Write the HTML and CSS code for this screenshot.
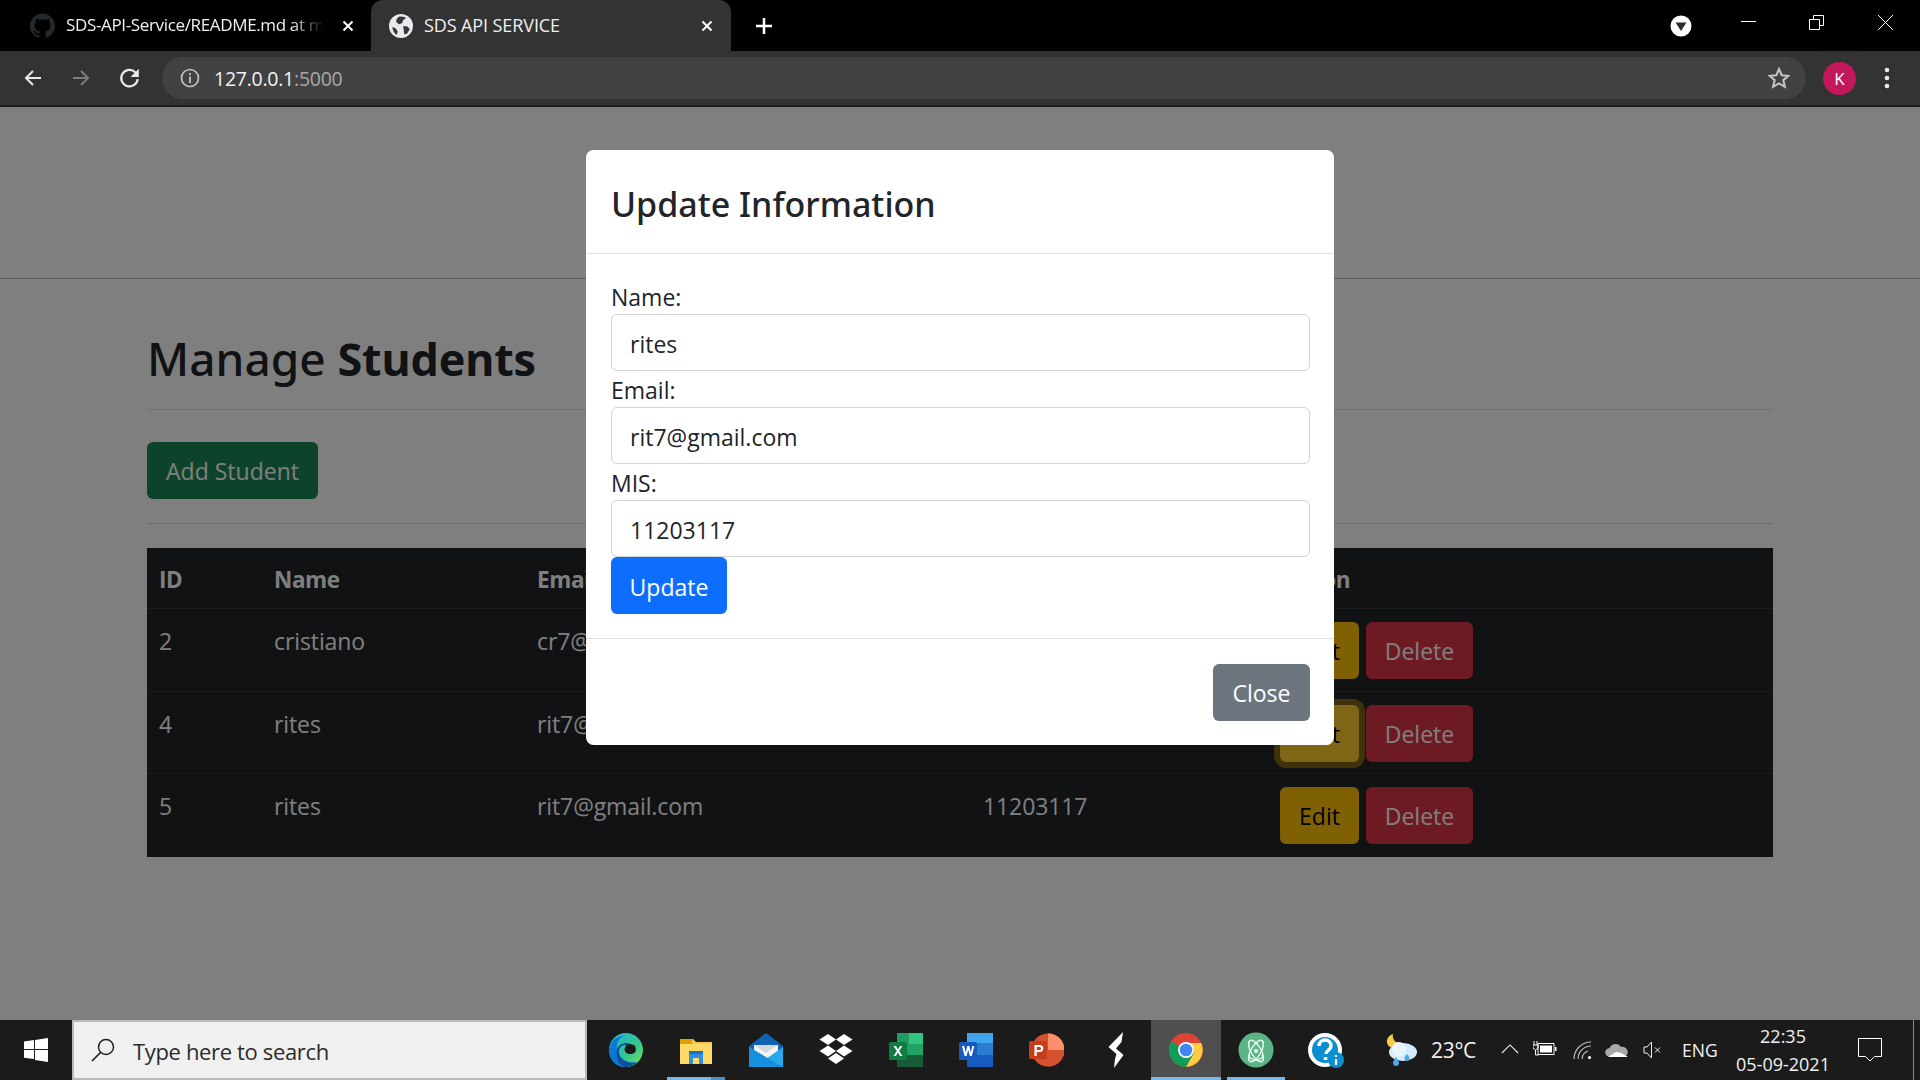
FILE: index.html
```html
<!DOCTYPE html>
<html lang="en">
<head>
<meta charset="utf-8">
<title>SDS API SERVICE</title>
<link rel="stylesheet" href="styles.css">
</head>
<body>
<div class="screen">
  <div class="tabstrip">
    <div class="tab tab-bg">
      <svg class="favicon" viewBox="0 0 16 16"><path fill="#24292e" d="M8 0C3.58 0 0 3.58 0 8c0 3.54 2.29 6.53 5.47 7.59.4.07.55-.17.55-.38 0-.19-.01-.82-.01-1.49-2.01.37-2.53-.49-2.69-.94-.09-.23-.48-.94-.82-1.13-.28-.15-.68-.52-.01-.53.63-.01 1.08.58 1.23.82.72 1.21 1.87.87 2.33.66.07-.52.28-.87.51-1.07-1.78-.2-3.64-.89-3.64-3.95 0-.87.31-1.59.82-2.15-.08-.2-.36-1.02.08-2.12 0 0 .67-.21 2.2.82.64-.18 1.32-.27 2-.27s1.36.09 2 .27c1.53-1.04 2.2-.82 2.2-.82.44 1.1.16 1.92.08 2.12.51.56.82 1.27.82 2.15 0 3.07-1.87 3.75-3.65 3.95.29.25.54.73.54 1.48 0 1.07-.01 1.93-.01 2.2 0 .21.15.46.55.38A8.013 8.013 0 0016 8c0-4.42-3.58-8-8-8z"/></svg>
      <span class="tab-title tab-title-fade">SDS-API-Service/README.md at m</span>
      <svg class="tab-x" viewBox="0 0 12 12"><path d="M1.5 1.5l9 9M10.5 1.5l-9 9" stroke="#fff" stroke-width="2"/></svg>
    </div>
    <div class="tab tab-active">
      <svg class="favicon" viewBox="0 0 22 22"><circle cx="11" cy="11" r="11" fill="#e8eaed"/><path fill="#35363a" d="M9 2.5c2.5-.6 6 .2 6.500 1.500L13 5.500l-1 3-3 1-2.500-2.500L7 4.500zM13 11l4 .5 2 2.500-2.500 4-2.500.5-.5-3.500zM3 12l3 1 2 3-1 3.200C5 18 3.300 15 3 12z"/></svg>
      <span class="tab-title tab-title-main">SDS API SERVICE</span>
      <svg class="tab-x" viewBox="0 0 12 12"><path d="M1.500 1.500l9 9M10.500 1.500l-9 9" stroke="#fff" stroke-width="2"/></svg>
    </div>
    <svg class="new-tab" viewBox="0 0 18 18"><path d="M9 1v16M1 9h16" stroke="#fff" stroke-width="2.500"/></svg>
    <div class="strip-space"></div>
    <svg class="tab-search" viewBox="0 0 22 22"><circle cx="11" cy="11" r="10.500" fill="#fff"/><path d="M5.500 7.500h11L11 16z" fill="#2b2b2b"/></svg>
    <svg class="win-btn win-min" viewBox="0 0 15 15"><path d="M0 7.500h15" stroke="#fff"/></svg>
    <svg class="win-btn win-max" viewBox="0 0 15 15"><path d="M.5 4.500h10v10H.5zM4.500 4.500V.5h10v10h-4" fill="none" stroke="#fff"/></svg>
    <svg class="win-btn win-close" viewBox="0 0 15 15"><path d="M0 0l15 15M15 0L0 15" stroke="#fff"/></svg>
  </div>

  <div class="toolbar">
    <svg class="nav-icon nav-back" viewBox="0 0 20 20"><path d="M18 10H3M10 3l-7 7 7 7" fill="none" stroke="#e8eaed" stroke-width="2"/></svg>
    <svg class="nav-icon nav-fwd" viewBox="0 0 20 20"><path d="M2 10h15M10 3l7 7-7 7" fill="none" stroke="#7b7c7d" stroke-width="2"/></svg>
    <svg class="nav-icon nav-reload" viewBox="0 0 20 20"><path d="M17 11a7.500 7.500 0 1 1-2-6" fill="none" stroke="#e8eaed" stroke-width="2"/><path d="M18 1.500v7.500h-7.500z" fill="#e8eaed"/></svg>
    <div class="omnibox">
      <svg class="omni-info" viewBox="0 0 20 20"><circle cx="10" cy="10" r="8.500" fill="none" stroke="#c4c5c6" stroke-width="1.700"/><path d="M10 8.500V15M10 5v2" stroke="#c4c5c6" stroke-width="1.800"/></svg>
      <span class="url"><span class="url-host">127.0.0.1</span><span class="url-port">:5000</span></span>
      <span class="omni-space"></span>
      <svg class="omni-star" viewBox="0 0 22 22"><path d="M11 2l2.700 6.200 6.700.6-5.100 4.400 1.600 6.600L11 16.300l-5.900 3.500 1.600-6.600L1.600 8.800l6.700-.6z" fill="none" stroke="#c4c5c6" stroke-width="2"/></svg>
    </div>
    <div class="avatar">K</div>
    <svg class="kebab" viewBox="0 0 6 22"><circle cx="3" cy="3" r="2.300" fill="#e8eaed"/><circle cx="3" cy="11" r="2.300" fill="#e8eaed"/><circle cx="3" cy="19" r="2.300" fill="#e8eaed"/></svg>
  </div>

  <div class="page">
    <div class="top-band"></div>
    <div class="container">
      <h2 class="page-title">Manage <b>Students</b></h2>
      <div class="add-bar"><button class="btn btn-green">Add Student</button></div>
      <table class="students">
        <colgroup><col class="c-id"><col class="c-name"><col class="c-email"><col class="c-mis"><col class="c-act"></colgroup>
        <thead><tr><th>ID</th><th>Name</th><th>Email</th><th>MIS</th><th>Action</th></tr></thead>
        <tbody>
          <tr><td>2</td><td>cristiano</td><td>cr7@gmail.com</td><td>11203100</td><td><div class="acts"><button class="btn btn-yellow">Edit</button><button class="btn btn-red">Delete</button></div></td></tr>
          <tr><td>4</td><td>rites</td><td>rit7@gmail.com</td><td>11203117</td><td><div class="acts"><button class="btn btn-yellow btn-focus">Edit</button><button class="btn btn-red">Delete</button></div></td></tr>
          <tr><td>5</td><td>rites</td><td>rit7@gmail.com</td><td>11203117</td><td><div class="acts"><button class="btn btn-yellow">Edit</button><button class="btn btn-red">Delete</button></div></td></tr>
        </tbody>
      </table>
    </div>

    <div class="backdrop">
      <div class="modal">
        <div class="modal-head"><h4 class="modal-title">Update Information</h4></div>
        <form class="modal-body">
          <label class="lbl">Name:</label>
          <input class="field" value="rites">
          <label class="lbl">Email:</label>
          <input class="field" value="rit7@gmail.com">
          <label class="lbl">MIS:</label>
          <input class="field" value="11203117">
          <div><button type="button" class="btn btn-blue">Update</button></div>
        </form>
        <div class="modal-foot"><button class="btn btn-grey">Close</button></div>
      </div>
    </div>
  </div>

  <div class="taskbar">
    <div class="start"><svg class="win-logo" viewBox="0 0 24 24"><path fill="#fff" d="M0 3.500l10-1.400V11H0zM11 2l13-2v11H11zM0 12h10v9L0 19.700zM11 12h13v12l-13-2z"/></svg></div>
    <div class="searchbox">
      <svg class="mag" viewBox="0 0 24 24"><circle cx="15" cy="9" r="7.500" fill="none" stroke="#222" stroke-width="1.500"/><path d="M9.500 14.500L1 23" stroke="#222" stroke-width="1.700"/></svg>
      <span class="search-text">Type here to search</span>
    </div>
    <div class="apps">
      <div class="app"><svg viewBox="0 0 36 36"><defs><linearGradient id="e1" x1="0" y1="0" x2="1" y2="1"><stop offset="0" stop-color="#22b8d8"/><stop offset=".6" stop-color="#35c58b"/><stop offset="1" stop-color="#7fe35d"/></linearGradient></defs><circle cx="18" cy="18" r="17" fill="url(#e1)"/><path d="M1 18C2 9 9 3 17 4c-6 1-9 7-8 13 1 8 9 15 20 13-3 3-7 5-12 5C8 35 1 28 1 18z" fill="#0c78d4"/><path d="M9 17c2-6 10-8 15-4 3 2 4 6 2 8-3 2-8 1-9-2-1-2 1-5 3-5-5-2-9 1-9 6 0 8 9 13 18 10-3 3-7 5-12 5-8-2-9-12-8-18z" fill="#0f4f96"/><path d="M17 19c1 3 6 4 9 2 3-2 2-6 0-8-1 0-3-1-5-1-3 1-5 4-4 7z" fill="#1b1b1b"/></svg></div>
      <div class="app app-on app-on-split"><svg viewBox="0 0 36 36"><path d="M2 7h13l3 3h16v22H2z" fill="#f2c94c"/><path d="M2 7h12v5H2z" fill="#e0a000"/><path d="M2 12h32v20H2z" fill="#ffd966"/><path d="M11 19h14v13h-4v-6h-6v6h-4z" fill="#2f8fe0"/><path d="M11 19h14v3H11z" fill="#1f6fc0"/></svg></div>
      <div class="app"><svg viewBox="0 0 36 36"><path d="M18 1l17 13v21H1V14z" fill="#0f62b0"/><path d="M6 13h24v8l-12 8-12-8z" fill="#f4f4f4"/><path d="M6 13h24l-12 8z" fill="#d4d8de"/><path d="M1 15l17 12 17-12v20H1z" fill="#27a8e8"/><path d="M1 15l34 20H1z" fill="#1490dd"/></svg></div>
      <div class="app"><svg viewBox="0 0 36 36"><path fill="#fff" d="M10 2l8 5.500-8 5.500-8.500-5.500zM26 2l8.500 5.500-8.500 5.500-8-5.500zM10 13.500l8 5.500-8 5.500L1.500 19zM26 13.500l8.500 5.500-8.500 5.500-8-5.500zM18 21l8 5.500-8 5.500-8-5.500z"/></svg></div>
      <div class="app"><svg viewBox="0 0 36 36"><path d="M9 1h24a2 2 0 0 1 2 2v30a2 2 0 0 1-2 2H9z" fill="#1f9e63"/><path d="M21 1h14v11H21z" fill="#33c481"/><path d="M21 12h14v11H21z" fill="#21a366"/><path d="M9 23h26v12H9z" fill="#185c37"/><rect x="1" y="10" width="18" height="18" rx="1.500" fill="#107c41"/><path d="M5.500 14h2.500l2 3.400 2-3.400h2.400l-3.200 5 3.300 5h-2.500l-2-3.500-2.100 3.500H5.500l3.300-5z" fill="#fff"/></svg></div>
      <div class="app"><svg viewBox="0 0 36 36"><path d="M9 1h24a2 2 0 0 1 2 2v30a2 2 0 0 1-2 2H11a2 2 0 0 1-2-2z" fill="#2b7cd3"/><path d="M9 1h26v10H9z" fill="#41a5ee"/><path d="M9 11h26v12H9z" fill="#2b7cd3"/><path d="M9 23h26v12H9z" fill="#185abd"/><rect x="1" y="10" width="18" height="18" rx="1.500" fill="#185abd"/><path d="M4 14h2.200l1.500 6.500L9.400 14h1.800l1.700 6.500L14.300 14H16.300l-2.500 10h-1.900L10.200 18l-1.700 6H6.600z" fill="#fff"/></svg></div>
      <div class="app"><svg viewBox="0 0 36 36"><circle cx="20" cy="18" r="16.500" fill="#d35230"/><path d="M20 1.500A16.500 16.500 0 0 1 36.500 18H20z" fill="#ff8f6b"/><path d="M20 18h16.500A16.500 16.500 0 0 1 20 34.500z" fill="#d35230"/><rect x="1" y="9" width="18" height="18" rx="1.500" fill="#c43e1c"/><path d="M6.500 13h5c2.500 0 3.800 1.400 3.800 3.500s-1.500 3.500-3.900 3.500H8.700v4H6.500zm2.200 2v3h2.500c1 0 1.800-.5 1.800-1.500s-.7-1.500-1.800-1.500z" fill="#fff"/></svg></div>
      <div class="app"><svg viewBox="0 0 36 36"><path fill="#fff" d="M25 0L23.500 10 18 16.500 25.500 23 16 36 17 27 18.500 22 10.500 15z"/></svg></div>
      <div class="app app-on app-active"><svg viewBox="0 0 36 36"><circle cx="18" cy="18" r="17" fill="#db4437"/><path d="M18 18L3.300 9.500A17 17 0 0 0 18 35l8-13z" fill="#0f9d58"/><path d="M18 11h15.200A17 17 0 0 1 18 35l7.500-13A8 8 0 0 0 18 11z" fill="#ffcd40"/><circle cx="18" cy="18" r="8" fill="#fff"/><circle cx="18" cy="18" r="6.300" fill="#4285f4"/></svg></div>
      <div class="app app-on"><svg viewBox="0 0 36 36"><circle cx="18" cy="18" r="17.500" fill="#5bb584"/><g fill="none" stroke="#eafff2" stroke-width="1.400"><ellipse cx="18" cy="19" rx="12" ry="5" transform="rotate(60 18 19)"/><ellipse cx="18" cy="19" rx="12" ry="5" transform="rotate(-60 18 19)"/><path d="M12 23c-3 2 3 5 6 5s9-3 6-5"/></g><circle cx="18" cy="19" r="2" fill="#eafff2"/></svg></div>
      <div class="app"><svg viewBox="0 0 36 36"><circle cx="17" cy="18" r="15" fill="#0b8fd0" stroke="#fff" stroke-width="4"/><path d="M11 14c0-4 3-6 6-6s6 2 6 6c0 4-5 4-5 8M17.500 25v3" fill="none" stroke="#fff" stroke-width="3.500"/><circle cx="28" cy="28" r="8" fill="#0b8fd0"/><path d="M28 27v6M28 23v2" stroke="#fff" stroke-width="2.200"/></svg></div>
    </div>
    <div class="tray">
      <svg class="weather" viewBox="0 0 36 36"><path d="M10 2c-1 5 2 9 8 9-1 4-6 7-11 4C2 12 3 4 10 2z" fill="#f7c948"/><ellipse cx="20" cy="20" rx="14" ry="9" fill="#d7ecfb"/><circle cx="16" cy="17" r="7" fill="#eaf6fe"/><path d="M13 25c2 3 3 4 3 6a3 3 0 0 1-6 0c0-2 1-3 3-6zM24 22c1.500 2 2.500 3 2.500 4.500a2.500 2.500 0 0 1-5 0C21.500 25 22.500 24 24 22z" fill="#4aa8ec"/></svg>
      <span class="temp">23°C</span>
      <svg class="chev" viewBox="0 0 20 12"><path d="M1 11l9-9 9 9" fill="none" stroke="#f0f0f0" stroke-width="1.200"/></svg>
      <svg class="batt" viewBox="0 0 24 16"><path d="M5 3.500h16v11H5z" fill="none" stroke="#fff"/><path d="M7 5.500h12v7H7z" fill="#fff"/><path d="M22 7h1.500v4H22z" fill="#fff"/><path d="M0 5h5v3l-2.500 2L0 8zM1 1v4M4 1v4M2.500 10v5h3" fill="none" stroke="#fff"/></svg>
      <svg class="wifi" viewBox="0 0 20 20"><path d="M1 19A17 17 0 0 1 18 2M5 19A13 13 0 0 1 18 6M9 19a9 9 0 0 1 6-8" fill="none" stroke="#bdbdbd" stroke-width="1.200"/><circle cx="16.500" cy="17.500" r="1.600" fill="#fff"/></svg>
      <svg class="cloud" viewBox="0 0 24 16"><path d="M5 15a4.500 4.500 0 0 1-.5-9A6.500 6.500 0 0 1 16 5a5 5 0 0 1 3 10z" fill="#a8a8a8"/><path d="M3 15l8-5 5 1 7 4z" fill="#fff"/></svg>
      <svg class="speaker" viewBox="0 0 20 18"><path d="M1 6h3l4.500-5v16L4 12H1zM12 6.500l5 5M17 6.500l-5 5" fill="none" stroke="#eee"/></svg>
      <span class="lang">ENG</span>
      <div class="clock"><span>22:35</span><span>05-09-2021</span></div>
      <svg class="notif" viewBox="0 0 24 24"><path d="M.5.500h23v18h-7l-4.500 4.500-4.500-4.500h-7z" fill="none" stroke="#fff"/></svg>
      <div class="show-desktop"></div>
    </div>
  </div>
</div>
</body>
</html>
```

FILE: styles.css
```css
* { box-sizing: border-box; }
html, body { margin: 0; height: 100%; overflow: hidden; }
body { font-family: "Open Sans", "Noto Sans", sans-serif; }
.screen { width: 1920px; height: 1080px; display: flex; flex-direction: column; background: #fff; }

/* tab strip */
.tabstrip { height: 51px; background: #000; display: flex; align-items: center; flex: none; }
.tab { height: 51px; display: flex; align-items: center; position: relative; }
.tab-bg { width: 371px; padding: 0 17px 0 30px; }
.tab-active { width: 360px; padding: 0 18px 0 18px; background: #333; border-radius: 12px 12px 0 0; }
.favicon { width: 24px; height: 24px; flex: none; }
.tab-bg .favicon { height: 26px; width: 25px; }
.tab-title { font-size: 17px; color: #f0f0f0; white-space: nowrap; overflow: hidden; flex: 1; margin: -2px 0 0 11px; letter-spacing: -.35px; }
.tab-title-main { font-size: 18px; letter-spacing: -.1px; }
.tab-title-fade { -webkit-mask-image: linear-gradient(90deg, #000 84%, transparent 96%); mask-image: linear-gradient(90deg, #000 84%, transparent 96%); }
.tab-x { width: 12px; height: 12px; flex: none; margin-left: 8px; }
.new-tab { width: 18px; height: 18px; margin-left: 24px; flex: none; }
.strip-space { flex: 1; }
.tab-search { width: 22px; height: 22px; margin-right: 49px; flex: none; }
.win-btn { width: 15px; height: 15px; flex: none; }
.win-min { margin-right: 53px; margin-top: -9px; }
.win-max { margin-right: 54px; margin-top: -6px; }
.win-close { margin-right: 27px; margin-top: -6px; }

/* toolbar */
.toolbar { height: 56px; background: #333; border-bottom: 2px solid #1c1c1c; display: flex; align-items: center; flex: none; padding-left: 23px; }
.nav-icon { width: 20px; height: 20px; flex: none; }
.nav-fwd { margin-left: 28px; }
.nav-reload { margin-left: 28px; width: 22px; height: 22px; }
.omnibox { width: 1644px; height: 42px; margin-left: 21px; border-radius: 21px; background: #424242; display: flex; align-items: center; padding: 0 16px 0 18px; }
.omni-info { width: 20px; height: 20px; flex: none; }
.url { font-size: 19.500px; margin-left: 14px; letter-spacing: -.25px; }
.url-host { color: #f1f3f4; }
.url-port { color: #a8a9aa; }
.omni-space { flex: 1; }
.omni-star { width: 22px; height: 22px; flex: none; }
.avatar { width: 33px; height: 33px; border-radius: 50%; background: #c2185b; color: #fff; font-size: 17px; display: flex; align-items: center; justify-content: center; margin-left: 17px; flex: none; }
.kebab { width: 6px; height: 22px; margin-left: 28px; flex: none; }

/* page */
.page { flex: 1; position: relative; overflow: hidden; color: #212529; background: #fff; }
.top-band { height: 172px; border-bottom: 1px solid #bfc4c8; }
.container { padding: 0 147px; }
.page-title { margin: 0; font-family: "Noto Sans", sans-serif; font-size: 46px; font-weight: 500; line-height: 72px; height: 131px; padding: 43px 0 15px; border-bottom: 1px solid #dee2e6; }
.page-title b { font-family: "Open Sans", sans-serif; font-weight: 700; font-size: 45px; letter-spacing: -.3px; }
.add-bar { padding: 32px 0 24px; border-bottom: 1px solid #dee2e6; margin-bottom: 24px; display: flex; }
.btn { height: 57px; padding: 2px 19px 0; border: 0; border-radius: 6px; font: 400 23px/55px "Open Sans", sans-serif; }
.btn-green { background: #198754; color: #fff; width: 171px; }
.btn-yellow { background: #ffc107; color: #000; width: 79px; padding: 2px 0 0; }
.btn-focus { background: #ffca2c; box-shadow: 0 0 0 6px rgba(217,164,6,.5); }
.btn-red { background: #dc3545; color: #fff; width: 107px; padding: 2px 0 0; }
.btn-blue { background: #0d6efd; color: #fff; width: 116px; padding: 3px 0 0; }
.btn-grey { background: #6c757d; color: #fff; width: 97px; padding: 2px 0 0; }

.students { width: 1626px; table-layout: fixed; border-collapse: collapse; background: #212529; color: #fff; font-size: 23px; }
.c-id { width: 115px; }
.c-name { width: 263px; }
.c-email { width: 446px; }
.c-mis { width: 297px; }
.students th { text-align: left; font-weight: 700; font-size: 22.500px; letter-spacing: -.4px; padding: 12px 12px 9px; line-height: 39px; border-bottom: 1px solid #32383e; }
.students td { vertical-align: top; padding: 13px 12px 11.500px; line-height: 39px; letter-spacing: -.1px; border-bottom: 1px solid #32383e; }
.students tr:last-child td { border-bottom: 0; padding-bottom: 12.500px; }
.acts { display: flex; gap: 7px; }

/* modal */
.backdrop { position: absolute; inset: 0; background: rgba(0,0,0,.5); display: flex; justify-content: center; align-items: flex-start; padding-top: 43px; }
.modal { width: 748px; background: #fff; border-radius: 7.500px; display: flex; flex-direction: column; }
.modal-head { height: 104px; padding: 27px 25px 0; border-bottom: 1px solid #dee2e6; }
.modal-title { margin: 0; font-family: "Noto Sans", sans-serif; font-size: 34px; font-weight: 500; line-height: 54px; color: #212529; }
.modal-body { padding: 24px 24px 24px 25px; display: flex; flex-direction: column; }
.lbl { font-size: 23px; line-height: 33px; padding-top: 3px; }
.field { height: 57px; width: 100%; padding: 2px 19px 0 18px; border: 1px solid #ced4da; border-radius: 6px; font: 400 23px "Open Sans", sans-serif; color: #212529; background: #fff; }
.modal-foot { border-top: 1px solid #dee2e6; padding: 25px 24px 24px; display: flex; justify-content: flex-end; }

/* taskbar */
.taskbar { height: 60px; background: #1b1b1b; display: flex; align-items: center; flex: none; }
.start { width: 72px; height: 60px; display: flex; align-items: center; justify-content: center; }
.win-logo { width: 24px; height: 24px; }
.searchbox { width: 515px; height: 60px; background: #f0f0f0; border: 2px solid #b9b9b9; display: flex; align-items: center; padding-left: 17px; }
.mag { width: 24px; height: 24px; flex: none; }
.search-text { font-size: 22px; color: #2b2b2b; margin-left: 18px; letter-spacing: -.35px; margin-top: 1px; }
.apps { display: flex; margin-left: 4px; width: 768px; }
.app { width: 70px; height: 60px; display: flex; align-items: center; justify-content: center; position: relative; flex: none; }
.app svg { width: 36px; height: 36px; }
.app-on::after { content: ""; position: absolute; left: 6px; right: 6px; bottom: 0; height: 3px; background: #76b9ed; }
.app-active { background: #4f4f4f; }
.app-active::after { left: 0; right: 0; }
.app-on-split::before { content: ""; position: absolute; right: 6px; bottom: 0; width: 14px; height: 3px; background: #4d8fc4; z-index: 1; }
.tray { flex: 1; display: flex; align-items: center; height: 60px; color: #f2f2f2; position: relative; }
.weather { width: 36px; height: 36px; margin-left: 24px; flex: none; }
.temp { font-size: 21px; margin-left: 12px; width: 50px; flex: none; white-space: nowrap; letter-spacing: -.3px; }
.chev { width: 18px; height: 11px; margin-left: 20px; flex: none; margin-top: -4px; }
.batt { width: 24px; height: 16px; margin-left: 14px; flex: none; margin-top: -4px; }
.wifi { width: 20px; height: 20px; margin-left: 16px; flex: none; }
.cloud { width: 24px; height: 16px; margin-left: 12px; flex: none; }
.speaker { width: 20px; height: 18px; margin-left: 14px; flex: none; }
.lang { font-size: 17.500px; margin-left: 19px; width: 36px; flex: none; }
.clock { width: 104px; margin-left: 13px; display: flex; flex-direction: column; align-items: center; gap: 6px; font-size: 18px; line-height: 22px; flex: none; }
.notif { width: 24px; height: 24px; margin-left: 23px; flex: none; }
.show-desktop { position: absolute; right: 6px; top: 0; bottom: 0; width: 1px; background: #8a8a8a; }
```
